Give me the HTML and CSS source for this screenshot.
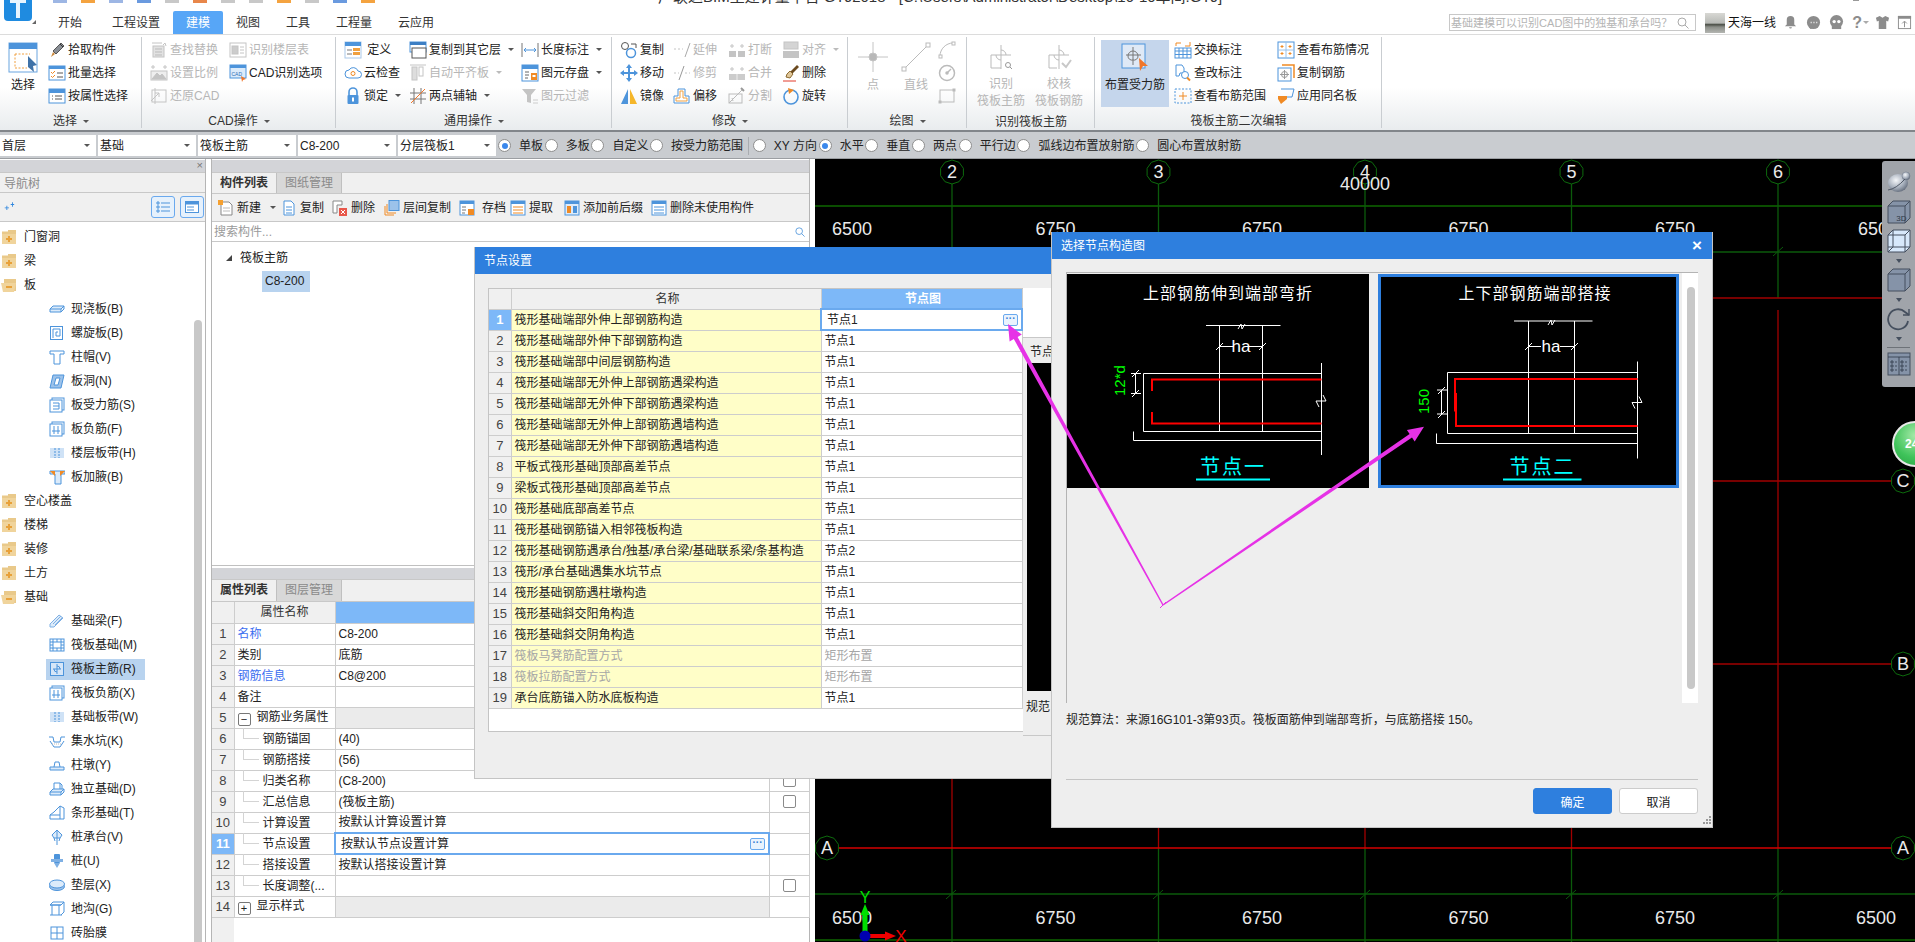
FILE: index.html
```html
<!DOCTYPE html>
<html lang="zh-CN">
<head>
<meta charset="utf-8">
<title>广联达BIM土建计量平台 GTJ2018</title>
<link rel="stylesheet" href="styles.css">
</head>
<body>
<svg class="defs" aria-hidden="true">
<defs>
<!-- ribbon: select -->
<symbol id="i-select" viewBox="0 0 30 31"><rect x="1" y="1" width="28" height="29" fill="#fff" stroke="#6aa5e0"/><rect x="1" y="1" width="28" height="6" fill="#4d94db"/><path d="M7 12h15M7 12v14h12" fill="none" stroke="#f0a040" stroke-dasharray="2 1.5"/><path d="M20 14l9 9-4 1 1 6-6-5z" fill="#3f72a8"/></symbol>
<symbol id="i-pick" viewBox="0 0 18 18"><path d="M13 2l3 3-8 8-3-3z" fill="#8a8f96" stroke="#555"/><path d="M5 11l2 2-4 3z" fill="#c9873a"/><path d="M12 3l3 3" stroke="#333"/></symbol>
<symbol id="i-batch" viewBox="0 0 18 18"><rect x="1" y="2" width="16" height="14" fill="#fff" stroke="#4d94db"/><rect x="1" y="2" width="16" height="3" fill="#4d94db"/><path d="M3 8l1.500 1.500L7 7M3 12l1.500 1.500L7 11" fill="none" stroke="#f08a24"/><path d="M9 9h6M9 13h6" stroke="#555"/></symbol>
<symbol id="i-attr" viewBox="0 0 18 18"><rect x="1" y="2" width="16" height="14" fill="#fff" stroke="#4d94db"/><rect x="1" y="2" width="16" height="4" fill="#4d94db"/><path d="M4 9h1M4 12h1M7 9h7M7 12h7" stroke="#555"/></symbol>
<symbol id="i-find" viewBox="0 0 18 18" fill="none" stroke="#c4c4c4"><path d="M2 2h10M13 4l2-2 1 3"/><rect x="3" y="5" width="11" height="11" fill="#e2e2e2"/><path d="M5 8h7M5 11h7M5 14h7" stroke="#bbb"/></symbol>
<symbol id="i-scale" viewBox="0 0 18 18" fill="none" stroke="#c4c4c4"><path d="M3 1v4M1 3h4M15 1v4M13 3h4"/><rect x="1" y="7" width="16" height="9" fill="#eee"/><path d="M2 15l5-6 3 3 2-2 4 5z" fill="#c4c4c4"/></symbol>
<symbol id="i-restore" viewBox="0 0 18 18" fill="none" stroke="#c4c4c4"><rect x="2" y="3" width="14" height="12"/><path d="M5 1v16M1 14l8-8M9 6h-4M9 6v4"/></symbol>
<symbol id="i-floor" viewBox="0 0 18 18" fill="none" stroke="#c4c4c4"><rect x="1" y="2" width="16" height="14"/><rect x="3" y="5" width="6" height="8" fill="#ccc"/><path d="M11 6h4M11 9h4M11 12h4"/></symbol>
<symbol id="i-cadopt" viewBox="0 0 18 18"><rect x="1" y="1" width="16" height="13" fill="#dcebfa" stroke="#4d94db"/><rect x="1" y="1" width="16" height="3" fill="#4d94db"/><text x="2.500" y="12" class="tiny">CAD</text><path d="M12 12l5 3-3 1-1 2z" fill="#f0762a"/></symbol>
<symbol id="i-def" viewBox="0 0 18 18"><rect x="1" y="1" width="16" height="16" fill="#fff" stroke="#aac8e8"/><rect x="1" y="1" width="16" height="4" fill="#4d94db"/><rect x="3" y="8" width="5" height="2" fill="#bbb"/><rect x="3" y="12" width="5" height="2" fill="#bbb"/><rect x="9" y="7" width="7" height="3" fill="#f0a040"/><rect x="9" y="11" width="7" height="3" fill="#f0a040"/></symbol>
<symbol id="i-cloud" viewBox="0 0 18 18"><path d="M5 14h9a3.500 3.500 0 0 0 0-7 5 5 0 0 0-9-1 4 4 0 0 0 0 8z" fill="#fff" stroke="#4d94db"/><circle cx="9" cy="9.500" r="2" fill="none" stroke="#f08a24"/></symbol>
<symbol id="i-lock" viewBox="0 0 18 18"><path d="M5 8V5a4 4 0 0 1 8 0v3" fill="none" stroke="#4d94db" stroke-width="1.600"/><rect x="3.500" y="8" width="11" height="9" rx="1" fill="#4d94db"/><rect x="8" y="10.500" width="2" height="4" fill="#fff"/></symbol>
<symbol id="i-copylayer" viewBox="0 0 18 18"><rect x="1" y="1" width="16" height="10" fill="#fff" stroke="#4d94db"/><rect x="1" y="1" width="16" height="3" fill="#3d7fc4"/><rect x="3" y="7" width="14" height="10" fill="#fff" stroke="#555"/></symbol>
<symbol id="i-autoalign" viewBox="0 0 18 18" fill="none" stroke="#c4c4c4"><path d="M1 1h16"/><rect x="3" y="3" width="5" height="13" fill="#ddd"/><rect x="10" y="3" width="4" height="9"/></symbol>
<symbol id="i-twoaxis" viewBox="0 0 18 18" fill="none" stroke="#777"><path d="M5 1v16M12 1v16M1 6h16M1 12h16"/><path d="M2 16L16 2" stroke="#f0762a"/></symbol>
<symbol id="i-lenmark" viewBox="0 0 18 18" fill="none" stroke="#4d94db"><path d="M1 2v14M17 2v14" stroke="#777"/><path d="M3 9h12M5 7L3 9l2 2M13 7l2 2-2 2"/></symbol>
<symbol id="i-save" viewBox="0 0 18 18"><rect x="1" y="1" width="16" height="16" fill="#fff" stroke="#4d94db"/><rect x="1" y="1" width="16" height="4" fill="#4d94db"/><path d="M4 8h4M4 11h4M4 14h3" stroke="#666"/><rect x="10" y="9" width="6" height="7" fill="#f08a24"/><rect x="11.500" y="11" width="3" height="2" fill="#fff"/></symbol>
<symbol id="i-filter" viewBox="0 0 18 18"><path d="M1 2h14l-5 6v8l-4-1V8z" fill="#c4c4c4"/><path d="M12 13h5M12 16h5" stroke="#ccc"/></symbol>
<symbol id="i-copy2" viewBox="0 0 18 18"><circle cx="5" cy="5" r="3.500" fill="none" stroke="#555"/><circle cx="11" cy="12" r="4.500" fill="none" stroke="#4d94db" stroke-width="1.500"/><path d="M11 3h5v4" fill="none" stroke="#555"/></symbol>
<symbol id="i-move" viewBox="0 0 18 18" fill="#4d94db"><path d="M9 0l3 4H10v4h4V6l4 3-4 3v-2h-4v4h2l-3 4-3-4h2v-4H4v2L0 9l4-3v2h4V4H6z"/></symbol>
<symbol id="i-mirror" viewBox="0 0 18 18"><path d="M8 2v15H1z" fill="#4d94db"/><path d="M10 2v15h7z" fill="#f5b62a"/></symbol>
<symbol id="i-extend" viewBox="0 0 18 18" fill="none" stroke="#c4c4c4"><path d="M1 8h9" stroke-dasharray="2 2"/><path d="M12 16L17 2" stroke="#aaa"/></symbol>
<symbol id="i-trim" viewBox="0 0 18 18" fill="none" stroke="#c4c4c4"><path d="M1 9h5M12 9h5" stroke-dasharray="2 2"/><path d="M6 16L11 2" stroke="#999"/></symbol>
<symbol id="i-offset" viewBox="0 0 18 18" fill="none"><path d="M1 16V9h4V2h7v7h4v7z" stroke="#4d94db" fill="#fff"/><path d="M3 14v-3h4V4h3v7h4v3z" stroke="#f0a040"/></symbol>
<symbol id="i-break" viewBox="0 0 18 18"><rect x="1" y="10" width="7" height="6" fill="#c4c4c4"/><rect x="10" y="10" width="7" height="6" fill="#c4c4c4"/><path d="M4 3v4M2 5h4M14 3v4M12 5h4" stroke="#c4c4c4"/></symbol>
<symbol id="i-merge" viewBox="0 0 18 18"><rect x="1" y="10" width="16" height="6" fill="#ccc"/><path d="M9 10v6" stroke="#eee"/><path d="M4 3v4M2 5h4M14 3v4M12 5h4" stroke="#c4c4c4"/></symbol>
<symbol id="i-split" viewBox="0 0 18 18" fill="none" stroke="#bbb"><rect x="1" y="7" width="13" height="9"/><path d="M1 16L15 2M5 14l-1-3"/><path d="M13 1l3 3" stroke="#999" stroke-width="2"/></symbol>
<symbol id="i-align" viewBox="0 0 18 18"><rect x="2" y="1" width="14" height="7" fill="#d4d4d4" stroke="#c4c4c4"/><rect x="1" y="10" width="16" height="7" fill="#c4c4c4"/></symbol>
<symbol id="i-del" viewBox="0 0 18 18"><path d="M15 1l2 2-9 9-2-2z" fill="#6b4a1f"/><path d="M8 7l3 3-3 4-4-1 1-3z" fill="#e0c79a" stroke="#8b6a30"/><path d="M1 17h13" stroke="#e23a2a"/></symbol>
<symbol id="i-rotate" viewBox="0 0 18 18"><circle cx="9" cy="10" r="7" fill="none" stroke="#4d94db" stroke-width="1.600"/><path d="M6 1l6 2-5 4z" fill="#f08a24"/></symbol>
<symbol id="i-swap" viewBox="0 0 18 18"><rect x="1" y="7" width="16" height="10" fill="#fff" stroke="#4d94db"/><path d="M1 10h16M1 13.500h16M5 7v10M9 7v10M13 7v10" stroke="#4d94db"/><path d="M2 5V2h5M16 1v4h-5" fill="none" stroke="#f08a24"/></symbol>
<symbol id="i-change" viewBox="0 0 18 18"><path d="M2 1h6l2 3v5H6l-1 3H2z" fill="#fff" stroke="#4d94db"/><circle cx="11" cy="11" r="3.500" fill="#fff" stroke="#4d94db"/><path d="M13 13.500l3 3" stroke="#f08a24" stroke-width="2"/></symbol>
<symbol id="i-range" viewBox="0 0 18 18" fill="none"><rect x="1" y="2" width="16" height="14" stroke="#4d94db" stroke-dasharray="2 1.500"/><path d="M9 5v8M5 9h8" stroke="#f08a24"/></symbol>
<symbol id="i-see" viewBox="0 0 18 18" fill="none"><rect x="1" y="1" width="16" height="16" stroke="#4d94db"/><path d="M9 1v16M1 9h16" stroke="#9cc2ea"/><path d="M5 4v3M3.500 5.500h3M13 4v3M11.500 5.500h3M5 11v3M3.500 12.500h3M13 11v3M11.500 12.500h3" stroke="#f08a24"/></symbol>
<symbol id="i-copyrebar" viewBox="0 0 18 18" fill="none"><path d="M5 1h12v13" stroke="#f08a24" stroke-width="1.500"/><rect x="1" y="4" width="13" height="13" fill="#fff" stroke="#4d94db"/><circle cx="7.500" cy="10.500" r="3" stroke="#999"/><path d="M7.500 6v9M3 10.500h9" stroke="#999"/></symbol>
<symbol id="i-apply" viewBox="0 0 18 18" fill="none"><path d="M4 2h13l-2 8H3" stroke="#4d94db"/><path d="M1 9h9v3l-6 5-3-5z" fill="#f08a24"/></symbol>
<!-- big draw icons -->
<symbol id="i-point" viewBox="0 0 30 30" fill="none" stroke="#c4c4c4"><path d="M15 0v30M0 15h30"/><circle cx="15" cy="15" r="4" fill="#b8b8b8"/></symbol>
<symbol id="i-line" viewBox="0 0 30 30" fill="none" stroke="#bbb"><path d="M3 27L27 3"/><rect x="1" y="25" width="4" height="4" fill="#fff"/><rect x="25" y="1" width="4" height="4" fill="#fff"/></symbol>
<symbol id="i-arc" viewBox="0 0 18 18" fill="none" stroke="#bbb"><path d="M2 15C2 8 8 2 15 2"/><rect x="1" y="14" width="3" height="3" fill="#fff"/><rect x="14" y="1" width="3" height="3" fill="#fff"/></symbol>
<symbol id="i-circle" viewBox="0 0 18 18" fill="none" stroke="#bbb" stroke-width="1.500"><circle cx="9" cy="9" r="7.500"/><path d="M9 9l4-4"/><circle cx="9" cy="9" r="1" fill="#bbb"/></symbol>
<symbol id="i-rect" viewBox="0 0 18 18" fill="none" stroke="#bbb"><rect x="2" y="3" width="14" height="12"/><rect x="1" y="14" width="2" height="2" fill="#bbb"/><rect x="15" y="2" width="2" height="2" fill="#bbb"/></symbol>
<symbol id="i-rebar1" viewBox="0 0 26 24" fill="none" stroke="#bbb"><path d="M13 0v24M3 10h20"/><path d="M13 5a5 5 0 0 1 5 5M8 10a5 5 0 0 0 5 5"/><path d="M3 10v13h10"/><circle cx="20" cy="20" r="2.500" stroke="#999"/><path d="M22 22l2 2" stroke="#999"/></symbol>
<symbol id="i-rebar2" viewBox="0 0 26 24" fill="none" stroke="#bbb"><path d="M13 0v24M3 10h20"/><path d="M13 5a5 5 0 0 1 5 5M8 10a5 5 0 0 0 5 5"/><path d="M3 10v13h8"/><path d="M16 18l4 4 5-7" stroke="#c8c8c8" stroke-width="2"/></symbol>
<symbol id="i-place" viewBox="0 0 28 28"><rect x="1" y="1" width="23" height="24" fill="#dfe9f6" stroke="#4d94db"/><path d="M12 4v18M5 12h15" stroke="#777" fill="none"/><path d="M12 8a5 5 0 0 1 5 5 4 4 0 0 1-5 4 4 4 0 0 1-5-4 5 5 0 0 1 5-5" fill="none" stroke="#777"/><path d="M18 15l9 8-5 0-3 5z" fill="#f0762a"/></symbol>
<!-- tree -->
<symbol id="t-fold" viewBox="0 0 16 16"><path d="M1 4V2.500h6V1h8v13H1z" fill="#e9c98a"/><path d="M1 5h14v10H1z" fill="#f0d49c"/><path d="M8 7v6M5 10h6" stroke="#e8a13a" stroke-width="2"/></symbol>
<symbol id="t-open" viewBox="0 0 16 16"><path d="M3 2h12v12H3z" fill="#e9c98a"/><path d="M0 6h15l-2 9H2z" fill="#f0d49c"/><path d="M5 10h6" stroke="#e8a13a" stroke-width="2"/></symbol>
<symbol id="t-slab" viewBox="0 0 16 16"><path d="M1 8l3-3h11l-3 3zM1 8v3h11V8M12 11l3-3V5" fill="#dcebfa" stroke="#4d94db"/></symbol>
<symbol id="t-spiral" viewBox="0 0 16 16" fill="none" stroke="#4d94db"><rect x="1.500" y="1.500" width="12" height="13"/><path d="M4 13V4h7v7H7V7h2"/></symbol>
<symbol id="t-cap" viewBox="0 0 16 16"><path d="M1 2h14v3H11v10H5V5H1z" fill="#fff" stroke="#4d94db"/></symbol>
<symbol id="t-hole" viewBox="0 0 16 16"><path d="M1 15L4 2h11l-3 13z" fill="#9cc2ea" stroke="#4d94db"/><path d="M5 12l2-7h4l-2 7z" fill="#fff" stroke="#4d94db"/></symbol>
<symbol id="t-rebar" viewBox="0 0 16 16" fill="none" stroke="#4d94db"><rect x="3" y="1" width="12" height="12"/><rect x="1" y="3" width="12" height="12" fill="#fff"/><path d="M4 6h6M10 6v6M4 12h6M4 9h6"/></symbol>
<symbol id="t-neg" viewBox="0 0 16 16" fill="none" stroke="#4d94db"><rect x="3" y="1" width="12" height="12"/><rect x="1" y="3" width="12" height="12" fill="#fff"/><path d="M5 5v8M9 5v8M3 10h8"/></symbol>
<symbol id="t-band" viewBox="0 0 16 16"><rect x="1" y="3" width="14" height="10" fill="#cfe2f6"/><path d="M6 3v10M10 3v10" stroke="#4d94db" stroke-dasharray="2 1"/></symbol>
<symbol id="t-add" viewBox="0 0 16 16"><path d="M1 2h15v3h-4v10H6V5H1z" fill="#dcebfa" stroke="#4d94db"/><path d="M1 2h5l0 5zM16 2h-5v5z" fill="#f08a24"/></symbol>
<symbol id="t-beam" viewBox="0 0 16 16" fill="none" stroke="#7fb0e4"><path d="M1 11l9-9 4 3-9 9H1z" fill="#dcebfa"/><path d="M4 11l8-8M6 12l7-7"/></symbol>
<symbol id="t-mat" viewBox="0 0 16 16" fill="none" stroke="#4d94db"><rect x="1" y="2" width="14" height="12"/><rect x="4" y="5" width="8" height="6"/><path d="M1 5h3M1 8h3M1 11h3M12 5h3M12 8h3M12 11h3M4 2v3M8 2v3M12 2v3M4 11v3M8 11v3M12 11v3"/></symbol>
<symbol id="t-main" viewBox="0 0 16 16" fill="none" stroke="#4d94db"><rect x="1.500" y="1.500" width="13" height="13" fill="#d6e6f8"/><path d="M8 3v10M4 8h8M8 5a3 3 0 0 1 3 3M5 8a3 3 0 0 0 3 3"/></symbol>
<symbol id="t-pit" viewBox="0 0 16 16" fill="none" stroke="#4d94db"><path d="M0 4h4l1 5h6l1-5h4M1 8l4 6h6l4-6"/><path d="M3 11h10" stroke="#bbb" stroke-dasharray="1 1"/></symbol>
<symbol id="t-pier" viewBox="0 0 16 16" fill="none" stroke="#4d94db"><path d="M1 10h14v3H1z" fill="#dcebfa"/><path d="M5 10l1-5h4l1 5"/></symbol>
<symbol id="t-iso" viewBox="0 0 16 16" fill="none" stroke="#4d94db"><path d="M1 11l3-3h11l-3 3zM1 11v3h11v-3M12 14l3-3V8" fill="#dcebfa"/><path d="M5 8V2h6l2 2v4M11 2v6"/></symbol>
<symbol id="t-strip" viewBox="0 0 16 16" fill="none" stroke="#4d94db"><path d="M1 14V10l4-3 6-6 4 2v11z" fill="#fff"/><path d="M1 10h10M11 1v13"/></symbol>
<symbol id="t-cappile" viewBox="0 0 16 16" fill="none" stroke="#4d94db"><path d="M8 1l5 5-2 3H5L3 6zM8 1v15M5 9l1 3M11 9l-1 3" fill="#dcebfa"/></symbol>
<symbol id="t-pile" viewBox="0 0 16 16"><rect x="5" y="1" width="6" height="9" rx="1" fill="#4d94db"/><path d="M2 6h12v3H2zM5 10h6l-3 5z" fill="#7fb0e4"/></symbol>
<symbol id="t-pad" viewBox="0 0 16 16" stroke="#4d94db"><ellipse cx="8" cy="9.500" rx="7.500" ry="4" fill="#9cc2ea"/><ellipse cx="8" cy="7" rx="7.500" ry="4" fill="#dcebfa"/></symbol>
<symbol id="t-ditch" viewBox="0 0 16 16" fill="none" stroke="#4d94db"><path d="M1 4l3-3h11l-3 3zM1 4h11M3 4v10M10 4v10M12 4l3-3v10l-3 3M1 14h12"/></symbol>
<symbol id="t-brick" viewBox="0 0 16 16" fill="none" stroke="#4d94db"><rect x="2" y="2" width="12" height="12"/><path d="M8 2v12M2 8h12"/></symbol>
<!-- panel toolbar -->
<symbol id="p-new" viewBox="0 0 16 16"><path d="M3 2h8l3 3v10H3z" fill="#fff" stroke="#888"/><path d="M5 8h7M5 11h7" stroke="#bbb"/><rect x="0" y="0" width="5" height="5" fill="#f5a030"/></symbol>
<symbol id="p-copy" viewBox="0 0 16 16"><path d="M3 1h7l3 3v11H3z" fill="#fff" stroke="#4d94db"/><path d="M5 7h6M5 10h6M5 13h6" stroke="#4d94db"/></symbol>
<symbol id="p-del" viewBox="0 0 16 16"><path d="M1 1h9v4H5v8H1z" fill="#fff" stroke="#888"/><rect x="7" y="8" width="8" height="8" fill="#e8574a"/><path d="M9 10l4 4M13 10l-4 4" stroke="#fff"/></symbol>
<symbol id="p-layer" viewBox="0 0 16 16"><rect x="5" y="0.500" width="10" height="10" fill="#9cc2ea" stroke="#4d94db"/><path d="M3 4v9h9M1 6v9h9" fill="none" stroke="#f08a24"/></symbol>
<symbol id="p-save" viewBox="0 0 16 16"><rect x="1" y="1" width="14" height="14" fill="#fff" stroke="#4d94db"/><rect x="1" y="1" width="14" height="3" fill="#4d94db"/><path d="M3 7h4M3 10h4M3 13h3" stroke="#777"/><rect x="9" y="9" width="6" height="6" fill="#f08a24"/></symbol>
<symbol id="p-get" viewBox="0 0 16 16"><rect x="1" y="1" width="14" height="14" fill="#fff" stroke="#4d94db"/><rect x="1" y="1" width="14" height="3" fill="#4d94db"/><path d="M3 7h10M3 10h10M3 13h10" stroke="#f08a24"/></symbol>
<symbol id="p-fix" viewBox="0 0 16 16"><rect x="1" y="1" width="14" height="14" fill="#dcebfa" stroke="#4d94db"/><rect x="1" y="1" width="14" height="3" fill="#4d94db"/><rect x="3" y="6" width="4" height="7" fill="#f08a24"/><rect x="9" y="6" width="4" height="7" fill="#4d94db"/></symbol>
<symbol id="p-delun" viewBox="0 0 16 16"><rect x="1" y="1" width="14" height="14" fill="#fff" stroke="#4d94db"/><rect x="1" y="1" width="14" height="3" fill="#4d94db"/><path d="M3 7h10M3 10h10M3 13h10" stroke="#4d94db"/></symbol>
<!-- view bar -->
<symbol id="v-cube" viewBox="0 0 24 24"><path d="M1 6l5-5h17v17l-5 5H1z" fill="#8593a8" stroke="#454f5e"/><path d="M1 6h17v17M18 6l5-5" fill="none" stroke="#454f5e"/></symbol>
<symbol id="v-wire" viewBox="0 0 24 24" fill="none" stroke="#454f5e"><path d="M1 6l5-5h17v17l-5 5H1z" fill="#d7e8fb"/><path d="M1 6h17v17M18 6l5-5M6 1v17H1M6 18h17M6 18l-5 5"/></symbol>
<symbol id="v-rot" viewBox="0 0 24 24" fill="none" stroke="#454f5e" stroke-width="1.800"><path d="M21 14a10 10 0 1 1-3-9l4 3"/><path d="M22 2v6h-6" stroke-width="1.400"/></symbol>
<symbol id="v-tab" viewBox="0 0 24 24"><rect x="1" y="1" width="22" height="22" fill="#8593a8" stroke="#454f5e"/><path d="M1 5h22M12 5v18M4 9h2v2H4zM8 10h2M4 13h2v2H4zM8 14h2M4 17h2v2H4zM8 18h2M14 9h2v2h-2zM18 10h2M14 13h2v2h-2zM18 14h2M14 17h2v2h-2zM18 18h2" fill="none" stroke="#2f3947" stroke-width=".8"/></symbol>
<radialGradient id="g-sphere" cx=".4" cy=".35" r=".7"><stop offset="0" stop-color="#f5f7fa"/><stop offset=".6" stop-color="#a6afbc"/><stop offset="1" stop-color="#5e6776"/></radialGradient>
<polygon id="axis" points="0,-12 7.050,-9.700 11.400,-3.700 11.400,3.700 7.050,9.700 0,12 -7.050,9.700 -11.400,3.700 -11.400,-3.700 -7.050,-9.700" fill="#000" stroke="#0d6b0d"/>
</defs>
</svg>

<header class="top">
  <div class="logo">
    <svg class="logo-mark" viewBox="0 0 28 21"><path d="M0 0h28v17a4 4 0 0 1-4 4H4a4 4 0 0 1-4-4z" fill="#1f8be0"/><path d="M6 0h16v3h-6v15h-4V3H6z" fill="#e8f5ff"/></svg>
    <i class="logo-corner"></i>
  </div>
  <div class="top-main">
    <div class="qa">
      <i class="qk qk-a"></i><i class="qk qk-o"></i><i class="qk qk-a"></i><i class="qk qk-b"></i><i class="qk qk-g"></i><i class="qk qk-c"></i><i class="qk qk-g"></i><i class="qk qk-g"></i><i class="qk qk-o"></i><i class="qk qk-g"></i><i class="qk qk-b"></i><i class="qk qk-o"></i>
      <span class="app-title">广联达BIM土建计量平台 GTJ2018 - [C:\Users\Administrator\Desktop\16-10车间.GTJ]</span>
      <i class="win-min"></i>
    </div>
    <div class="tabrow">
      <nav class="tabs">
        <span class="tab">开始</span><span class="tab">工程设置</span><span class="tab on">建模</span><span class="tab">视图</span><span class="tab">工具</span><span class="tab">工程量</span><span class="tab">云应用</span>
      </nav>
      <div class="search-top"><span>基础建模可以识别CAD图中的独基和承台吗？</span>
        <svg class="mag" viewBox="0 0 12 12" fill="none" stroke="#aaa"><circle cx="5" cy="5" r="4"/><path d="M8 8l3.500 3.500"/></svg></div>
      <i class="avatar"></i><span class="uname">天海一线</span>
      <div class="sysicons">
        <svg class="si" viewBox="0 0 16 16" fill="#8c8c8c"><path d="M8 1a4 4 0 0 1 4 4v5l2 2H2l2-2V5a4 4 0 0 1 4-4zM6.500 13h3a1.500 1.500 0 0 1-3 0z"/></svg>
        <svg class="si" viewBox="0 0 16 16" fill="#8c8c8c"><circle cx="8" cy="8" r="7"/><path d="M4 15l1-4 3 3z"/><path d="M5 8h1M8 8h1M11 8h1" stroke="#fff" stroke-width="1.500"/></svg>
        <svg class="si" viewBox="0 0 16 16" fill="#8c8c8c"><circle cx="8" cy="7" r="7"/><path d="M3 12h10v3H3z"/><circle cx="5.500" cy="7" r="1.800" fill="#fff"/><circle cx="10.500" cy="7" r="1.800" fill="#fff"/></svg>
        <span class="qmark">?</span><i class="caret small"></i>
        <svg class="si shirt" viewBox="0 0 16 16" fill="#8c8c8c"><path d="M5 1L1 3l1 4 2-1v9h8V6l2 1 1-4-4-2-3 2z"/></svg>
        <svg class="si" viewBox="0 0 16 16"><rect x="1.500" y="1.500" width="13" height="13" fill="#fff" stroke="#8c8c8c"/><rect x="1" y="1" width="14" height="3" fill="#8c8c8c"/><path d="M8 13V7M5.500 9L8 6.500 10.500 9" stroke="#8c8c8c" fill="none"/></svg>
      </div>
    </div>
  </div>
</header>

<section class="ribbon">
  <div class="grp g-sel">
    <div class="gb">
      <div class="big big-sel"><svg class="ic30"><use href="#i-select"/></svg><span>选择</span></div>
      <div class="col">
        <div class="it"><svg class="ic"><use href="#i-pick"/></svg>拾取构件</div>
        <div class="it"><svg class="ic"><use href="#i-batch"/></svg>批量选择</div>
        <div class="it"><svg class="ic"><use href="#i-attr"/></svg>按属性选择</div>
      </div>
    </div>
    <div class="gl">选择<i class="caret"></i></div>
  </div>
  <div class="grp g-cad">
    <div class="gb">
      <div class="col w79">
        <div class="it dis"><svg class="ic"><use href="#i-find"/></svg>查找替换</div>
        <div class="it dis"><svg class="ic"><use href="#i-scale"/></svg>设置比例</div>
        <div class="it dis"><svg class="ic"><use href="#i-restore"/></svg>还原CAD</div>
      </div>
      <div class="col">
        <div class="it dis"><svg class="ic"><use href="#i-floor"/></svg>识别楼层表</div>
        <div class="it"><svg class="ic"><use href="#i-cadopt"/></svg>CAD识别选项</div>
      </div>
    </div>
    <div class="gl">CAD操作<i class="caret"></i></div>
  </div>
  <div class="grp g-gen">
    <div class="gb">
      <div class="col w65">
        <div class="it"><svg class="ic"><use href="#i-def"/></svg>&nbsp;定义</div>
        <div class="it"><svg class="ic"><use href="#i-cloud"/></svg>云检查</div>
        <div class="it"><svg class="ic"><use href="#i-lock"/></svg>锁定<i class="caret"></i></div>
      </div>
      <div class="col w112">
        <div class="it"><svg class="ic"><use href="#i-copylayer"/></svg>复制到其它层<i class="caret"></i></div>
        <div class="it dis"><svg class="ic"><use href="#i-autoalign"/></svg>自动平齐板<i class="caret"></i></div>
        <div class="it"><svg class="ic"><use href="#i-twoaxis"/></svg>两点辅轴<i class="caret"></i></div>
      </div>
      <div class="col">
        <div class="it"><svg class="ic"><use href="#i-lenmark"/></svg>长度标注<i class="caret"></i></div>
        <div class="it"><svg class="ic"><use href="#i-save"/></svg>图元存盘<i class="caret"></i></div>
        <div class="it dis"><svg class="ic"><use href="#i-filter"/></svg>图元过滤</div>
      </div>
    </div>
    <div class="gl">通用操作<i class="caret"></i></div>
  </div>
  <div class="grp g-mod">
    <div class="gb">
      <div class="col w53">
        <div class="it"><svg class="ic"><use href="#i-copy2"/></svg>复制</div>
        <div class="it"><svg class="ic"><use href="#i-move"/></svg>移动</div>
        <div class="it"><svg class="ic"><use href="#i-mirror"/></svg>镜像</div>
      </div>
      <div class="col w55">
        <div class="it dis"><svg class="ic"><use href="#i-extend"/></svg>延伸</div>
        <div class="it dis"><svg class="ic"><use href="#i-trim"/></svg>修剪</div>
        <div class="it"><svg class="ic"><use href="#i-offset"/></svg>偏移</div>
      </div>
      <div class="col w54">
        <div class="it dis"><svg class="ic"><use href="#i-break"/></svg>打断</div>
        <div class="it dis"><svg class="ic"><use href="#i-merge"/></svg>合并</div>
        <div class="it dis"><svg class="ic"><use href="#i-split"/></svg>分割</div>
      </div>
      <div class="col">
        <div class="it dis"><svg class="ic"><use href="#i-align"/></svg>对齐<i class="caret"></i></div>
        <div class="it"><svg class="ic"><use href="#i-del"/></svg>删除</div>
        <div class="it"><svg class="ic"><use href="#i-rotate"/></svg>旋转</div>
      </div>
    </div>
    <div class="gl">修改<i class="caret"></i></div>
  </div>
  <div class="grp g-draw">
    <div class="gb">
      <div class="drawbtn w50 dis"><svg class="ic-draw"><use href="#i-point"/></svg><span>点</span></div>
      <div class="drawbtn w36 dis"><svg class="ic-draw"><use href="#i-line"/></svg><span>直线</span></div>
      <div class="col ml-draw">
        <div class="it"><svg class="ic"><use href="#i-arc"/></svg></div>
        <div class="it"><svg class="ic"><use href="#i-circle"/></svg></div>
        <div class="it"><svg class="ic"><use href="#i-rect"/></svg></div>
      </div>
    </div>
    <div class="gl">绘图<i class="caret"></i></div>
  </div>
  <div class="grp g-rec">
    <div class="gb">
      <div class="recbtn dis"><svg class="ic26"><use href="#i-rebar1"/></svg><span>识别<br>筏板主筋</span></div>
      <div class="recbtn dis"><svg class="ic26"><use href="#i-rebar2"/></svg><span>校核<br>筏板钢筋</span></div>
    </div>
    <div class="gl gl-low">识别筏板主筋</div>
  </div>
  <div class="grp g-sec">
    <div class="gb">
      <div class="actbtn"><svg class="ic28"><use href="#i-place"/></svg><span>布置受力筋</span></div>
      <div class="col w103">
        <div class="it"><svg class="ic"><use href="#i-swap"/></svg>交换标注</div>
        <div class="it"><svg class="ic"><use href="#i-change"/></svg>查改标注</div>
        <div class="it"><svg class="ic"><use href="#i-range"/></svg>查看布筋范围</div>
      </div>
      <div class="col">
        <div class="it"><svg class="ic"><use href="#i-see"/></svg>查看布筋情况</div>
        <div class="it"><svg class="ic"><use href="#i-copyrebar"/></svg>复制钢筋</div>
        <div class="it"><svg class="ic"><use href="#i-apply"/></svg>应用同名板</div>
      </div>
    </div>
    <div class="gl gl-low">筏板主筋二次编辑</div>
  </div>
</section>

<section class="optbar">
  <div class="combo">首层<i class="caret"></i></div>
  <div class="combo">基础<i class="caret"></i></div>
  <div class="combo">筏板主筋<i class="caret"></i></div>
  <div class="combo">C8-200<i class="caret"></i></div>
  <div class="combo">分层筏板1<i class="caret"></i></div>
  <div class="opts">
    <label class="opt"><i class="radio on"></i>单板</label>
    <label class="opt"><i class="radio"></i>多板</label>
    <label class="opt"><i class="radio"></i>自定义</label>
    <label class="opt"><i class="radio"></i>按受力筋范围</label>
    <i class="opt-sep"></i>
    <label class="opt"><i class="radio"></i>XY 方向</label>
    <label class="opt"><i class="radio on"></i>水平</label>
    <label class="opt"><i class="radio"></i>垂直</label>
    <label class="opt"><i class="radio"></i>两点</label>
    <label class="opt"><i class="radio"></i>平行边</label>
    <label class="opt"><i class="radio"></i>弧线边布置放射筋</label>
    <label class="opt"><i class="radio"></i>圆心布置放射筋</label>
  </div>
</section>

<main class="main">
  <aside class="nav">
    <div class="phead"><span class="px">×</span></div>
    <div class="nav-title">导航树</div>
    <div class="nav-tools">
      <svg class="spark" viewBox="0 0 14 12" fill="#2e86de"><path d="M2 6h2V4h1v2h2v1H5v2H4V7H2zM9 2h1.500V0h1v2H13v1h-1.500v2h-1V3H9z"/></svg>
      <span class="navbtn"><svg viewBox="0 0 14 12" fill="none" stroke="#4d94db"><path d="M1 1h2v2H1zM1 5h2v2H1zM1 9h2v2H1zM5 2h9M5 6h9M5 10h9"/></svg></span>
      <span class="navbtn"><svg viewBox="0 0 14 12"><rect x=".500" y=".500" width="13" height="11" fill="#fff" stroke="#4d94db"/><rect y="0" width="14" height="3.500" fill="#4d94db"/><path d="M2 6h7M2 9h7" stroke="#4d94db"/></svg></span>
    </div>
    <div class="tree">
      <div class="fr"><svg class="ti"><use href="#t-fold"/></svg>门窗洞</div>
      <div class="fr"><svg class="ti"><use href="#t-fold"/></svg>梁</div>
      <div class="fr"><svg class="ti"><use href="#t-open"/></svg>板</div>
      <div class="cr"><span class="pill"><svg class="ti"><use href="#t-slab"/></svg>现浇板(B)</span></div>
      <div class="cr"><span class="pill"><svg class="ti"><use href="#t-spiral"/></svg>螺旋板(B)</span></div>
      <div class="cr"><span class="pill"><svg class="ti"><use href="#t-cap"/></svg>柱帽(V)</span></div>
      <div class="cr"><span class="pill"><svg class="ti"><use href="#t-hole"/></svg>板洞(N)</span></div>
      <div class="cr"><span class="pill"><svg class="ti"><use href="#t-rebar"/></svg>板受力筋(S)</span></div>
      <div class="cr"><span class="pill"><svg class="ti"><use href="#t-neg"/></svg>板负筋(F)</span></div>
      <div class="cr"><span class="pill"><svg class="ti"><use href="#t-band"/></svg>楼层板带(H)</span></div>
      <div class="cr"><span class="pill"><svg class="ti"><use href="#t-add"/></svg>板加腋(B)</span></div>
      <div class="fr"><svg class="ti"><use href="#t-fold"/></svg>空心楼盖</div>
      <div class="fr"><svg class="ti"><use href="#t-fold"/></svg>楼梯</div>
      <div class="fr"><svg class="ti"><use href="#t-fold"/></svg>装修</div>
      <div class="fr"><svg class="ti"><use href="#t-fold"/></svg>土方</div>
      <div class="fr"><svg class="ti"><use href="#t-open"/></svg>基础</div>
      <div class="cr"><span class="pill"><svg class="ti"><use href="#t-beam"/></svg>基础梁(F)</span></div>
      <div class="cr"><span class="pill"><svg class="ti"><use href="#t-mat"/></svg>筏板基础(M)</span></div>
      <div class="cr"><span class="pill sel"><svg class="ti"><use href="#t-main"/></svg>筏板主筋(R)</span></div>
      <div class="cr"><span class="pill"><svg class="ti"><use href="#t-neg"/></svg>筏板负筋(X)</span></div>
      <div class="cr"><span class="pill"><svg class="ti"><use href="#t-band"/></svg>基础板带(W)</span></div>
      <div class="cr"><span class="pill"><svg class="ti"><use href="#t-pit"/></svg>集水坑(K)</span></div>
      <div class="cr"><span class="pill"><svg class="ti"><use href="#t-pier"/></svg>柱墩(Y)</span></div>
      <div class="cr"><span class="pill"><svg class="ti"><use href="#t-iso"/></svg>独立基础(D)</span></div>
      <div class="cr"><span class="pill"><svg class="ti"><use href="#t-strip"/></svg>条形基础(T)</span></div>
      <div class="cr"><span class="pill"><svg class="ti"><use href="#t-cappile"/></svg>桩承台(V)</span></div>
      <div class="cr"><span class="pill"><svg class="ti"><use href="#t-pile"/></svg>桩(U)</span></div>
      <div class="cr"><span class="pill"><svg class="ti"><use href="#t-pad"/></svg>垫层(X)</span></div>
      <div class="cr"><span class="pill"><svg class="ti"><use href="#t-ditch"/></svg>地沟(G)</span></div>
      <div class="cr"><span class="pill"><svg class="ti"><use href="#t-brick"/></svg>砖胎膜</span></div>
      <i class="tree-scroll"></i>
    </div>
  </aside>

  <div class="mid">
    <section class="upper">
      <div class="phead"></div>
      <div class="ptabs"><span class="ptab on">构件列表</span><span class="ptab">图纸管理</span></div>
      <div class="ptools">
        <span class="pt pt-new"><svg class="pi"><use href="#p-new"/></svg>新建<i class="caret"></i></span>
        <span class="pt pt-copy"><svg class="pi"><use href="#p-copy"/></svg>复制</span>
        <span class="pt pt-del"><svg class="pi"><use href="#p-del"/></svg>删除</span>
        <span class="pt pt-lay"><svg class="pi"><use href="#p-layer"/></svg>层间复制</span>
        <span class="pt pt-sav"><svg class="pi"><use href="#p-save"/></svg>存档</span>
        <span class="pt pt-get"><svg class="pi"><use href="#p-get"/></svg>提取</span>
        <span class="pt pt-fix"><svg class="pi"><use href="#p-fix"/></svg>添加前后缀</span>
        <span class="pt"><svg class="pi"><use href="#p-delun"/></svg>删除未使用构件</span>
      </div>
      <div class="psearch"><span>搜索构件...</span><svg class="mag2" viewBox="0 0 12 12" fill="none" stroke="#4d94db"><circle cx="5" cy="5" r="4"/><path d="M8 8l3.500 3.500"/></svg></div>
      <div class="list">
        <div class="li"><i class="tri"></i>筏板主筋</div>
        <div class="li2"><span>C8-200</span></div>
      </div>
    </section>
    <section class="lower">
      <div class="phead"></div>
      <div class="ptabs"><span class="ptab on">属性列表</span><span class="ptab">图层管理</span></div>
      <div class="pwrap">
        <table class="ptable">
          <colgroup><col class="c-n"><col class="c-p"><col class="c-v"><col class="c-k"></colgroup>
          <tr class="hd"><td class="n"></td><td class="ctr">属性名称</td><td class="blue"></td><td></td></tr>
          <tr><td class="n">1</td><td class="lnk">名称</td><td>C8-200</td><td></td></tr>
          <tr><td class="n">2</td><td>类别</td><td>底筋</td><td></td></tr>
          <tr><td class="n">3</td><td class="lnk">钢筋信息</td><td>C8@200</td><td></td></tr>
          <tr><td class="n">4</td><td>备注</td><td></td><td></td></tr>
          <tr class="gp"><td class="n">5</td><td class="pl"><span class="exp">−</span>钢筋业务属性</td><td class="gr"></td><td></td></tr>
          <tr><td class="n">6</td><td class="sub"><i class="conn"></i>钢筋锚固</td><td>(40)</td><td></td></tr>
          <tr><td class="n">7</td><td class="sub"><i class="conn"></i>钢筋搭接</td><td>(56)</td><td></td></tr>
          <tr><td class="n">8</td><td class="sub"><i class="conn"></i>归类名称</td><td>(C8-200)</td><td class="k"><i class="cb"></i></td></tr>
          <tr><td class="n">9</td><td class="sub"><i class="conn"></i>汇总信息</td><td>(筏板主筋)</td><td class="k"><i class="cb"></i></td></tr>
          <tr><td class="n">10</td><td class="sub"><i class="conn"></i>计算设置</td><td>按默认计算设置计算</td><td></td></tr>
          <tr><td class="n act">11</td><td class="sub"><i class="conn"></i>节点设置</td><td class="edit"><div class="edit-in"><span>按默认节点设置计算</span><i class="more">···</i></div></td><td></td></tr>
          <tr><td class="n">12</td><td class="sub"><i class="conn"></i>搭接设置</td><td>按默认搭接设置计算</td><td></td></tr>
          <tr><td class="n">13</td><td class="sub"><i class="conn"></i>长度调整(...</td><td></td><td class="k"><i class="cb"></i></td></tr>
          <tr class="gp"><td class="n">14</td><td class="pl"><span class="exp">+</span>显示样式</td><td class="gr"></td><td></td></tr>
        </table>
      </div>
    </section>
  </div>

  <div class="canvas">
    <svg class="cad" viewBox="815 159 1100 783">
      <g fill="none" stroke="#0b5a0b">
        <path d="M815 206H1915" stroke="#0a4d00" stroke-width="2"/>
        <path d="M815 252H1915M815 894H1915" stroke-width="1.400"/>
        <path d="M815 940H1915" stroke="#0a4d00" stroke-width="2"/>
        <path d="M952 184V298M1158.500 184V298M1365 184V298M1571.500 184V298M1778 184V298M952 848V942M1158.500 848V942M1365 848V942M1571.500 848V942M1778 848V942" stroke-width="1.300"/>
        <path d="M1773 256l10-9M946 899l10-9M1153 899l10-9M1360 899l10-9M1566 899l10-9M1773 899l10-9"/>
      </g>
      <g fill="none" stroke="#a00000" stroke-width="1.300">
        <path d="M815 298H1915M815 481H1915M815 664H1915"/>
        <path d="M952 298V848M1158.500 298V848M1365 298V848M1571.500 298V848M1778 310V848"/>
        <path d="M815 848H1915" stroke="#d40000"/>
      </g>
      <use href="#axis" x="952" y="172"/><use href="#axis" x="1158.500" y="172"/><use href="#axis" x="1365" y="172"/><use href="#axis" x="1571.500" y="172"/><use href="#axis" x="1778" y="172"/>
      <use href="#axis" x="827" y="848"/><use href="#axis" x="1903" y="848"/><use href="#axis" x="1903" y="664"/><use href="#axis" x="1903" y="481"/>
      <g class="cadtxt">
        <text x="952" y="178">2</text><text x="1158.500" y="178">3</text><text x="1365" y="178">4</text><text x="1571.500" y="178">5</text><text x="1778" y="178">6</text>
        <text x="827" y="854">A</text><text x="1903" y="854">A</text><text x="1903" y="670">B</text><text x="1903" y="487">C</text>
        <text x="1365" y="190">40000</text>
        <text x="852" y="235">6500</text><text x="1055.500" y="235">6750</text><text x="1262" y="235">6750</text><text x="1468.500" y="235">6750</text><text x="1675" y="235">6750</text><text x="1878" y="235">6500</text>
        <text x="852" y="924">6500</text><text x="1055.500" y="924">6750</text><text x="1262" y="924">6750</text><text x="1468.500" y="924">6750</text><text x="1675" y="924">6750</text><text x="1876" y="924">6500</text>
      </g>
      <path d="M865 933V913" stroke="#00e000" stroke-width="5"/><path d="M865 904l-4.500 11h9z" fill="#00e000"/>
      <path d="M868 936h18" stroke="#f00000" stroke-width="4"/><path d="M896 936l-11-4.500v9z" fill="#f00000"/>
      <circle cx="865" cy="936" r="5.500" fill="#0000b0"/>
      <text class="ax-y" x="865" y="903">Y</text><text class="ax-x" x="901" y="942">X</text>
    </svg>
    <div class="viewbar">
      <svg class="vs" viewBox="0 0 24 24"><ellipse cx="11" cy="13" rx="10" ry="9" fill="url(#g-sphere)"/><circle cx="19" cy="6" r="4" fill="url(#g-sphere)" stroke="#6d7686" stroke-width=".5"/><path d="M1 20q8-1 17-11" fill="none" stroke="#4f5866"/></svg>
      <div class="v3d"><svg class="vs"><use href="#v-cube"/></svg><span>3D</span></div>
      <svg class="vs"><use href="#v-wire"/></svg>
      <i class="vcaret"></i>
      <svg class="vs"><use href="#v-cube"/></svg>
      <i class="vcaret"></i>
      <svg class="vs"><use href="#v-rot"/></svg>
      <i class="vcaret"></i>
      <i class="vsep"></i>
      <svg class="vs"><use href="#v-tab"/></svg>
    </div>
    <div class="ball">24</div>
  </div>
</main>

<!-- node-setting dialog -->
<section class="dlg dlg1">
  <div class="dlg-title">节点设置</div>
  <div class="dlg1-body">
    <div class="ngrid">
      <table class="ntable">
        <colgroup><col class="nc-n"><col class="nc-a"><col class="nc-b"></colgroup>
        <tr class="nh"><td class="n"></td><td>名称</td><td class="nblue">节点图</td></tr>
        <tr><td class="n act">1</td><td class="y">筏形基础端部外伸上部钢筋构造</td><td class="edit"><div class="edit-in"><span>节点1</span><i class="more">···</i></div></td></tr>
        <tr><td class="n">2</td><td class="y">筏形基础端部外伸下部钢筋构造</td><td>节点1</td></tr>
        <tr><td class="n">3</td><td class="y">筏形基础端部中间层钢筋构造</td><td>节点1</td></tr>
        <tr><td class="n">4</td><td class="y">筏形基础端部无外伸上部钢筋遇梁构造</td><td>节点1</td></tr>
        <tr><td class="n">5</td><td class="y">筏形基础端部无外伸下部钢筋遇梁构造</td><td>节点1</td></tr>
        <tr><td class="n">6</td><td class="y">筏形基础端部无外伸上部钢筋遇墙构造</td><td>节点1</td></tr>
        <tr><td class="n">7</td><td class="y">筏形基础端部无外伸下部钢筋遇墙构造</td><td>节点1</td></tr>
        <tr><td class="n">8</td><td class="y">平板式筏形基础顶部高差节点</td><td>节点1</td></tr>
        <tr><td class="n">9</td><td class="y">梁板式筏形基础顶部高差节点</td><td>节点1</td></tr>
        <tr><td class="n">10</td><td class="y">筏形基础底部高差节点</td><td>节点1</td></tr>
        <tr><td class="n">11</td><td class="y">筏形基础钢筋锚入相邻筏板构造</td><td>节点1</td></tr>
        <tr><td class="n">12</td><td class="y">筏形基础钢筋遇承台/独基/承台梁/基础联系梁/条基构造</td><td>节点2</td></tr>
        <tr><td class="n">13</td><td class="y">筏形/承台基础遇集水坑节点</td><td>节点1</td></tr>
        <tr><td class="n">14</td><td class="y">筏形基础钢筋遇柱墩构造</td><td>节点1</td></tr>
        <tr><td class="n">15</td><td class="y">筏形基础斜交阳角构造</td><td>节点1</td></tr>
        <tr><td class="n">16</td><td class="y">筏形基础斜交阴角构造</td><td>节点1</td></tr>
        <tr class="off"><td class="n">17</td><td class="y">筏板马凳筋配置方式</td><td>矩形布置</td></tr>
        <tr class="off"><td class="n">18</td><td class="y">筏板拉筋配置方式</td><td>矩形布置</td></tr>
        <tr><td class="n">19</td><td class="y">承台底筋锚入防水底板构造</td><td>节点1</td></tr>
      </table>
    </div>
    <div class="nside">
      <div class="nside-white"></div>
      <div class="nside-panel">
        <div class="nside-tab">节点</div>
        <div class="nside-img"></div>
        <div class="nside-txt">规范</div>
      </div>
    </div>
  </div>
</section>

<!-- node picture dialog -->
<section class="dlg dlg2">
  <div class="dlg-title dt2"><span>选择节点构造图</span><span class="dlg-x">×</span></div>
  <div class="picbox">
    <div class="cards">
      <div class="card">
        <svg class="cardsvg" viewBox="1067 274 302 214">
          <g fill="none" stroke="#fff">
            <path d="M1206 325.500H1280.500M1219.500 325.500V431.500M1262.500 325.500V431.500M1238 329l3-5 1 5 3-5"/>
            <path d="M1219.500 346.500H1234M1248 346.500H1262.500M1216 350l7-7M1259 350l7-7"/>
            <path d="M1321.500 373.500H1143.500V431.500H1321.500M1133.500 431.500V440.500H1321.500M1321.500 363V455M1316 401h10l-3-6M1316 401l3 6"/>
            <path d="M1131 373.500h10M1131 393.500h10M1135.500 373.500V393.500M1132 377l7-7M1132 397l7-7"/>
          </g>
          <path d="M1152 391V379.500H1321.500M1152 412V423.500H1321.500" fill="none" stroke="#f00" stroke-width="2"/>
          <text class="ttl" x="1228" y="298.500">上部钢筋伸到端部弯折</text>
          <text class="ha" x="1241" y="352">ha</text>
          <text class="dimg" transform="translate(1125 396) rotate(-90)">12*d</text>
          <text class="cn" x="1233" y="474">节点一</text>
          <path d="M1196 479.500H1270" stroke="#0ff" stroke-width="2"/>
        </svg>
      </div>
      <div class="card sel">
        <svg class="cardsvg" viewBox="1378 274 301 214">
          <g fill="none" stroke="#fff">
            <path d="M1514 321H1592.500M1528.500 321V433.500M1574.500 321V433.500M1548 325l3-5 1 5 3-5"/>
            <path d="M1528.500 346.500H1541M1560 346.500H1574.500M1525 350l7-7M1571 350l7-7"/>
            <path d="M1637.500 372.500H1447.500V433.500H1637.500M1436.500 433.500V443.500H1637.500M1637.500 361.500V458.500M1632 402.500h10l-3-6M1632 402.500l3 6"/>
            <path d="M1437 390h10M1437 414h10M1441.500 390V414M1438 394l7-7M1438 418l7-7"/>
          </g>
          <path d="M1455 411.500V379H1637.500M1456 393V426H1637.500" fill="none" stroke="#f00" stroke-width="2"/>
          <text class="ttl" x="1535" y="298.500">上下部钢筋端部搭接</text>
          <text class="ha" x="1551" y="352">ha</text>
          <text class="dimg" transform="translate(1429 414) rotate(-90)">150</text>
          <text class="cn" x="1542.500" y="474">节点二</text>
          <path d="M1503 479.500H1581.500" stroke="#0ff" stroke-width="2"/>
          <rect class="selbox" x="1379.500" y="275.500" width="298" height="211"/>
        </svg>
      </div>
    </div>
    <div class="picscroll"><i></i></div>
  </div>
  <p class="rule">规范算法：来源16G101-3第93页。筏板面筋伸到端部弯折，与底筋搭接 150。</p>
  <div class="dlg-foot">
    <button class="btn primary">确定</button><button class="btn">取消</button>
  </div>
  <svg class="grip" viewBox="0 0 9 9" fill="#999"><path d="M7 0h2v2H7zM4 3h2v2H4zM7 3h2v2H7zM1 6h2v2H1zM4 6h2v2H4zM7 6h2v2H7z"/></svg>
</section>

<svg class="arrows" viewBox="0 0 1915 942">
  <polygon points="1008,324 1021.800,334.600 1017.600,336.900 1163.600,604.700 1162.400,605.300 1013.800,339.100 1009.600,341.400"/>
  <polygon points="1424,426.700 1414.700,441.500 1412,437.500 1163.400,605.600 1162.600,604.400 1409.600,433.900 1406.900,429.900"/>
  <path d="M1160 608l6-6" stroke="#e632e6" fill="none"/>
</svg>
</body>
</html>
```

FILE: styles.css
```css
*{box-sizing:border-box}
html,body{margin:0;padding:0}
body{position:relative;width:1915px;height:942px;overflow:hidden;background:#fff;color:#222;font:12px/16px "Liberation Sans","Noto Sans CJK SC",sans-serif}
i{display:block;font-style:normal}
.defs{position:absolute;width:0;height:0}
.tiny{font:5px "Liberation Sans",sans-serif;fill:#2c6fb5}

/* top */
.top{display:flex;height:35px;border-bottom:1px solid #dcdcdc}
.logo{position:relative;width:45px;flex:none;padding-left:4px}
.logo-mark{width:28px;height:21px;display:block}
.logo-corner{position:absolute;left:32px;top:20px;border-style:solid;border-width:0 0 4px 4px;border-color:transparent transparent #666 transparent}
.top-main{flex:1;min-width:0;display:flex;flex-direction:column}
.qa{height:11px;display:flex;padding-left:8px;gap:14px;overflow:hidden;position:relative}
.qk{width:14px;height:3px;flex:none}
.qk-a{background:#9db6e4}.qk-o{background:#f4a340}.qk-b{background:#6a9adf}.qk-g{background:#c8c8c8}.qk-c{background:#e8874a}
.app-title{position:absolute;left:613px;top:-11px;font-size:15px;line-height:15px;white-space:nowrap;color:#333}
.win-min{position:absolute;left:1808px;top:0;width:6px;height:1px;background:#999}
.tabrow{height:23px;display:flex;align-items:center}
.tabs{display:flex;height:23px;flex:none}
.tab{padding:0 13px;line-height:25px;font-size:12px;color:#333;white-space:nowrap}
.tab:first-child{padding-right:17px}
.tab.on{background:#57a6f7;color:#fff;border-radius:2px 2px 0 0}
.search-top{margin-left:1002px;width:247px;height:17px;flex:none;border:1px solid #c8c8c8;display:flex;align-items:center;justify-content:space-between;padding:0 6px 0 1px;font-size:11px;color:#b4b4b4;white-space:nowrap;overflow:hidden}
.mag{width:12px;height:12px;flex:none}
.avatar{width:20px;height:20px;margin-left:9px;flex:none;background:linear-gradient(180deg,#d8d8d4 0,#b8bab6 50%,#4c5048 58%,#8b8e88 70%,#b4b6b2 100%)}
.uname{margin-left:3px;font-size:12px;color:#111;white-space:nowrap;flex:none}
.sysicons{display:flex;align-items:center;margin-left:7px;flex:none}
.si{width:15px;height:15px;flex:none;margin-right:8px}
.qmark{font-size:16px;font-weight:bold;color:#8c8c8c;width:11px;line-height:16px}
.sysicons .caret.small{margin:0 6px 0 0;border-top-color:#aaa}
.shirt{margin-right:7px}

/* ribbon */
.ribbon{display:flex;height:97px;background:linear-gradient(180deg,#fff 0,#fff 55%,#e9ecee 100%);border-bottom:2px solid #81858a}
.grp{display:flex;flex-direction:column;position:relative;flex:none;padding-top:3px}
.grp::after{content:"";position:absolute;right:0;top:2px;bottom:2px;width:1px;background:#c9cdd1}
.g-sel{width:142px}.g-cad{width:194px}.g-gen{width:276px}.g-mod{width:236px}.g-draw{width:119px}.g-rec{width:128px}.g-sec{width:287px}
.gb{display:flex;height:73px}
.gl{height:18px;display:flex;align-items:center;justify-content:center;gap:6px;margin-top:1px;color:#333;white-space:nowrap}
.gl-low{margin-top:3px}
.col{display:flex;flex-direction:column;flex:none}
.it{display:flex;align-items:center;height:23px;gap:2px;white-space:nowrap;color:#222}
.it .caret{margin-left:5px}
.dis,.dis span{color:#b6b6b6}
.ic{width:18px;height:18px;flex:none}
.caret{width:0;height:0;border-style:solid;border-width:3px 3px 0;border-color:#555 transparent transparent;flex:none}
.dis .caret{border-top-color:#bbb}
.ic30{width:30px;height:31px;display:block}
.big{display:flex;flex-direction:column;align-items:center}
.big-sel{width:40px;margin-left:3px;margin-right:5px;padding-top:4px;gap:4px}
.g-cad .gb,.g-gen .gb,.g-mod .gb{padding-left:8px}
.w79{width:79px}.w65{width:65px}.w112{width:112px}.w53{width:53px}.w55{width:55px}.w54{width:54px}.w103{width:103px}
.w50{width:50px}.w36{width:36px}
.drawbtn{display:flex;flex-direction:column;align-items:center;padding-top:4px;gap:5px;flex:none;white-space:nowrap}
.ic-draw{width:30px;height:30px;flex:none}
.ml-draw{margin-left:4px}
.recbtn{width:58px;display:flex;flex-direction:column;align-items:center;padding-top:7px;gap:7px;line-height:17px;text-align:center;flex:none}
.g-rec .gb{padding-left:5px}
.ic26{width:26px;height:24px;flex:none}
.actbtn{width:68px;height:67px;margin:2px 5px 0 6px;background:#c5d6ec;display:flex;flex-direction:column;align-items:center;padding-top:3px;gap:6px;flex:none;white-space:nowrap}
.ic28{width:28px;height:28px;flex:none}

/* option bar */
.optbar{display:flex;height:27px;background:#c9ccd0;align-items:flex-start;padding-top:3px;gap:2px;border-bottom:1px solid #9b9ea2}
.combo{width:98px;height:21px;background:#fff;display:flex;align-items:center;justify-content:space-between;padding:0 6px 0 2px;flex:none;white-space:nowrap}
.combo:first-child{width:96px}
.opts{display:flex;align-items:center;height:21px}
.opt{display:flex;align-items:center;gap:8px;white-space:nowrap;margin-right:1.700px;color:#222}
.radio{width:13px;height:13px;border-radius:50%;background:#fff;border:1px solid #8e8e8e;flex:none;position:relative}
.radio.on::after{content:"";position:absolute;left:2.500px;top:2.500px;width:6px;height:6px;border-radius:50%;background:#3b88ec}
.opt-sep{width:1px;height:18px;background:#a9acb0;margin:0 4px 0 3px}

/* main */
.main{display:flex;height:783px}
.phead{height:12px;background:#d3d4d8;position:relative;flex:none}
.px{position:absolute;right:2px;top:-2px;font-size:11px;color:#777;line-height:14px}
.nav{width:206px;flex:none;border-right:1px solid #b5b5b5;background:#fff;display:flex;flex-direction:column;padding-top:1px;margin-right:5px}
.nav-title{height:21px;background:#f0f0f0;color:#8a8a8a;padding-left:4px;line-height:22px;border-top:1px solid #c8c8c8;border-bottom:1px solid #c8c8c8;flex:none}
.nav-tools{height:29px;background:#f0f0f0;border-bottom:1px solid #c8c8c8;display:flex;align-items:center;padding:0 1px 0 3px;gap:5px;flex:none}
.spark{width:12px;height:11px;margin-right:auto}
.navbtn{width:24px;height:22px;border:1px solid #6aa9ee;border-radius:3px;background:#e6f1fc;display:flex;align-items:center;justify-content:center}
.navbtn svg{width:14px;height:12px}
.tree{position:relative;flex:1;padding-top:3px;overflow:hidden}
.fr{display:flex;align-items:center;height:24px;padding-left:1px;gap:7px}
.cr{display:flex;align-items:center;height:24px}
.pill{display:flex;align-items:center;height:21px;margin-left:46px;padding:0 9px 0 3px;gap:6px;white-space:nowrap}
.pill.sel{background:#b8d3ef}
.ti{width:16px;height:16px;flex:none}
.tree-scroll{position:absolute;left:194px;top:98px;width:8px;height:640px;border-radius:4px;background:#c8c8c8}

.mid{width:599px;flex:none;display:flex;flex-direction:column;border-left:1px solid #b5b5b5;border-right:1px solid #b5b5b5;margin-right:5px;padding-top:1px}
.upper{height:406px;flex:none;display:flex;flex-direction:column;border-bottom:1px solid #c0c0c0}
.ptabs{height:22px;background:#f0f0f0;display:flex;border-bottom:1px solid #c8c8c8;border-top:1px solid #c8c8c8;flex:none}
.ptab{width:65px;text-align:center;line-height:21px;background:#d8d8d8;color:#8a8a8a;border-right:1px solid #c0c0c0}
.ptab.on{background:#f0f0f0;color:#333;font-weight:bold}
.ptools{height:28px;background:#f0f0f0;border-bottom:1px solid #c8c8c8;display:flex;align-items:center;padding-left:6px;white-space:nowrap;flex:none}
.pt{display:flex;align-items:center;gap:3px}
.pt .caret{margin-left:6px}
.pt-new{width:63px}.pt-copy{width:51px}.pt-del{width:52px}.pt-lay{width:75px}.pt-sav{width:51px;gap:7px}.pt-get{width:54px}.pt-fix{width:87px}
.pi{width:16px;height:16px;flex:none}
.psearch{height:20px;display:flex;align-items:center;justify-content:space-between;padding:0 4px 0 2px;color:#9a9a9a;border-bottom:1px solid #c8c8c8;flex:none}
.mag2{width:10px;height:10px}
.list{flex:1;background:#fff;padding-top:5px}
.li{display:flex;align-items:center;height:21px;padding-left:14px;gap:8px}
.tri{width:0;height:0;border-style:solid;border-width:0 0 6px 6px;border-color:transparent transparent #444 transparent}
.li2{padding-left:50px;height:21px;margin-top:3px}
.li2 span{display:inline-block;height:21px;line-height:21px;padding:0 3px;width:48px;background:#b8d3ef}

.lower{flex:1;margin-top:2px;display:flex;flex-direction:column;min-height:0}
.lower .phead{height:11px}
.lower .ptabs{height:23px}
.pwrap{flex:1;background:linear-gradient(90deg,#f0f0f0 22px,#fff 22px)}
table{border-collapse:collapse;table-layout:fixed}
td{height:21px;padding:0 0 0 3px;border:1px solid #cdcdcd;white-space:nowrap;overflow:hidden;line-height:16px}
.ptable{width:597px}
.ptable tr:first-child td{border-top:0}
.ptable td:first-child{border-left:0}
.c-n{width:22px}.c-p{width:101px}.c-v{width:434px}.c-k{width:40px}
.n{background:#f0f0f0;text-align:center;padding:0;color:#444;font-size:13px}
.n.act{background:#7db8f8;color:#fff;font-weight:bold}
.hd .ctr{text-align:center;background:#f0f0f0;color:#333;padding:0}
.blue{background:#7db8f8}
.lnk{color:#3c6ef0}
.pl{padding-left:2px}
.gr{background:#ebebeb}
.exp{display:inline-block;width:13px;height:13px;border:1px solid #777;border-radius:2px;line-height:10px;text-align:center;margin:0 6px 0 1px;vertical-align:-2px;font-size:11px}
.sub{position:relative;padding-left:28px}
.conn{position:absolute;left:8px;top:-1px;width:16px;height:11px;border-left:1px solid #d4d4d4;border-bottom:1px solid #d4d4d4}
.sub:has(.conn){overflow:visible}
.k{padding:0}
.cb{width:13px;height:13px;margin:0 auto;border:1px solid #8a8a8a;border-radius:2px;background:#fff}
.edit{padding:0;border:2px solid #6aa9ee}
.edit-in{display:flex;justify-content:space-between;align-items:center;padding:0 3px 0 5px}
.more{width:15px;height:12px;border:1px solid #6aa9ee;border-radius:2px;background:#eaf3fd;color:#3a7fd5;font-size:10px;line-height:7px;text-align:center;font-weight:bold}

/* canvas */
.canvas{flex:1;position:relative;background:#000;min-width:0}
.cad{display:block;width:1100px;height:783px}
.cadtxt text{font:18px "Liberation Sans",sans-serif;fill:#eaeaea;text-anchor:middle}
.ax-y{font:16px "Liberation Sans",sans-serif;fill:#00e000;text-anchor:middle}
.ax-x{font:17px "Liberation Sans",sans-serif;fill:#f00000;text-anchor:middle}
.viewbar{position:absolute;right:0;top:2px;width:33px;height:226px;background:#a0a4aa;border-radius:3px 0 0 3px;display:flex;flex-direction:column;align-items:center;padding-top:9px}
.vs{width:24px;height:24px;display:block;flex:none}
.v3d{position:relative;margin-top:6px;margin-bottom:5px;height:24px}
.v3d span{position:absolute;right:4px;bottom:1px;font-size:8px;line-height:9px;color:#2f3947}
.vcaret{width:0;height:0;margin:6px 0 5px;border-style:solid;border-width:4px 3.500px 0;border-color:#454f5e transparent transparent;flex:none}
.vsep{width:23px;height:1px;background:#6d7278;margin:1px 0 4px}
.ball{position:absolute;left:1077px;top:262px;width:46px;height:46px;border-radius:50%;background:radial-gradient(circle at 50% 30%,#a5eaa8,#3fc35a 60%,#2aa345);border:2px solid #e8e8e8;color:#fff;font-weight:bold;font-size:12px;line-height:42px;padding-left:11px}

/* dialogs */
.dlg{position:absolute;background:#eee;border:1px solid #c4c4c4;border-top:0}
.dlg-title{height:27px;background:#2e7fde;color:#fff;line-height:28px;padding-left:9px}
.dlg1{left:474px;top:247px;width:640px;height:532px}
.dlg1-body{display:flex;padding:14px 0 0 13px}
.ngrid{width:535px;height:444px;background:#fff;border:1px solid #c4c4c4;border-right:0;flex:none}
.ntable{width:533px}
.nc-n{width:22px}.nc-a{width:310px}.nc-b{width:201px}
.nh td{text-align:center;background:#f0f0f0;padding:0;height:20px;color:#333}
.nh td:first-child,.ntable .n{border-left:0}
.nh td{border-top:0}
.nh .nblue{background:#7db8f8;color:#fff;font-weight:bold}
.ntable td{padding-left:3px}
.ntable td.n{padding:0}
.ntable td.edit{padding:0}
.y{background:#fffec8}
.off td{color:#a6a6a6}
.off td.n{color:#444}
.nside{flex:1;display:flex;flex-direction:column;min-width:0}
.nside-white{height:49px;background:#fff}
.nside-panel{height:399px;background:#eee;border-top:1px solid #c8c8c8;border-bottom:1px solid #c8c8c8;overflow:hidden;white-space:nowrap}
.nside-tab{height:25px;line-height:28px;padding-left:7px}
.nside-img{height:328px;margin-left:4px;background:#000}
.nside-txt{padding:8px 0 0 3px}
.dlg2{left:1051px;top:232px;width:662px;height:596px;z-index:2}
.dt2{display:flex;justify-content:space-between;padding-right:10px}
.dlg-x{font-size:17px;font-weight:bold}
.picbox{margin:13px 14px 0 14px;width:632px;height:431px;border:1px solid #b4b4b4;border-right:0;border-bottom:0;display:flex;padding-top:1px}
.cards{flex:1;display:flex;gap:9px;align-items:flex-start}
.card{width:302px;height:214px;background:#000;flex:none}
.card.sel{width:301px}
.cardsvg{display:block;width:100%;height:100%}
.selbox{fill:none;stroke:#2e7fde;stroke-width:3}
.ttl{font:16px "Noto Sans CJK SC",sans-serif;fill:#fff;text-anchor:middle;letter-spacing:1px}
.ha{font:17px "Liberation Sans",sans-serif;fill:#fff;text-anchor:middle}
.dimg{font:15px "Liberation Sans",sans-serif;fill:#0f0}
.cn{font:20px "Noto Sans CJK SC",sans-serif;fill:#0ff;text-anchor:middle;letter-spacing:2px}
.picscroll{width:16px;background:#fff;flex:none;padding:14px 0 0 5px;margin-top:-1px}
.picscroll i{width:8px;height:402px;border-radius:4px;background:#c8c8c8}
.rule{margin:9px 0 0 14px;height:16px;white-space:nowrap;color:#222}
.dlg-foot{margin:51px 14px 0 14px;padding-top:8px;border-top:1px solid #c4c4c4;display:flex;justify-content:flex-end;gap:7px}
.btn{width:79px;height:26px;border:1px solid #ccc;border-radius:3px;background:#fff;color:#222;font:12px "Liberation Sans","Noto Sans CJK SC",sans-serif;padding:0}
.btn.primary{background:#2e7fde;border-color:#2e7fde;color:#fff}
.grip{position:absolute;right:1px;bottom:2px;width:9px;height:9px}
.arrows{position:absolute;left:0;top:0;width:1915px;height:942px;fill:#e632e6;z-index:3;pointer-events:none}
```
